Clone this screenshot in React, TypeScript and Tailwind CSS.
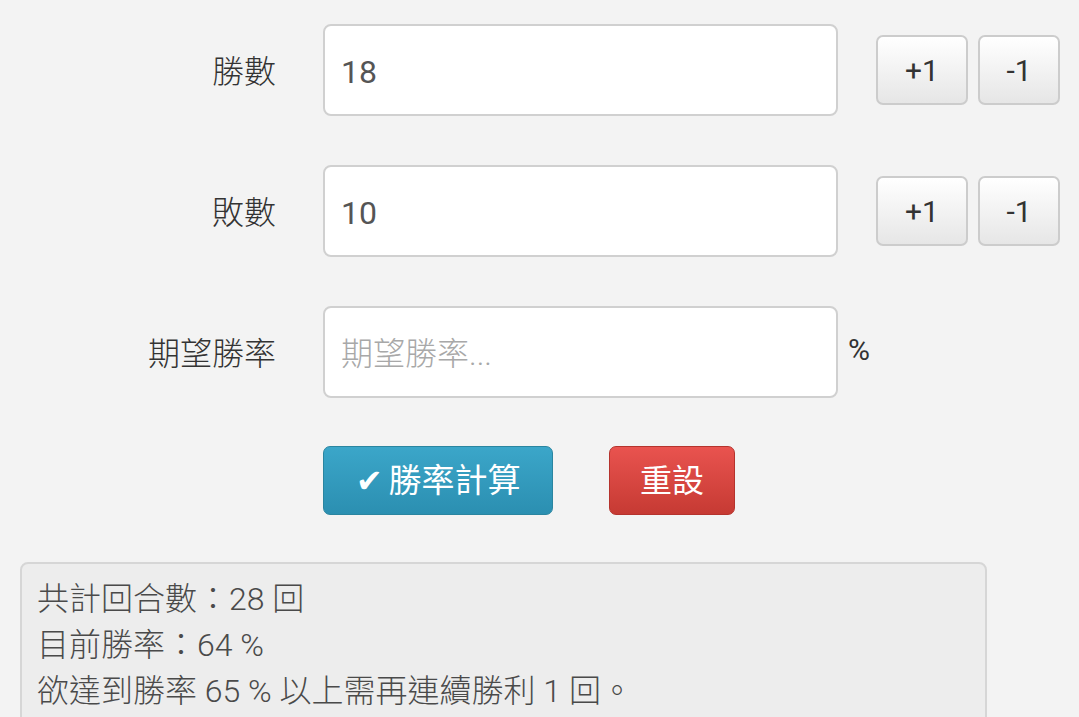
import React from "react";

const font = { fontFamily: '"Roboto", "Noto Sans CJK TC", sans-serif' };

function Row({ label, value, placeholder, suffix, buttons }: { label: string; value?: string; placeholder?: string; suffix?: boolean; buttons?: boolean }) {
  return (
    <div className="flex items-center h-[92px]">
      <div className="w-[276px] text-right text-[32px] text-[#333] font-light pt-[4px]">{label}</div>
      <div className="ml-[47px] w-[515px] h-[92px] bg-white border-2 border-[#d0d0d0] rounded-[8px] flex items-center px-[16px] text-[32px] pt-[4px]">
        {value ? <span className="text-[#555]">{value}</span> : <span className="text-[#a8a8a8] font-light">{placeholder}</span>}
      </div>
      {suffix && <div className="ml-[10px] text-[30px] text-[#333] -mt-[6px]">%</div>}
      {buttons && (
        <div className="ml-[38px] flex gap-[10px]">
          <div className="w-[92px] h-[70px] rounded-[7px] border-2 border-[#cccccc] bg-gradient-to-b from-white to-[#e6e6e6] flex items-center justify-center text-[30px] text-[#333]">+1</div>
          <div className="w-[82px] h-[70px] rounded-[7px] border-2 border-[#cccccc] bg-gradient-to-b from-white to-[#e6e6e6] flex items-center justify-center text-[30px] text-[#333]">-1</div>
        </div>
      )}
    </div>
  );
}

export default function App() {
  return (
    <div style={font} className="w-[1079px] h-[717px] bg-[#f3f3f3] overflow-hidden">
      <div className="pt-[24px] flex flex-col gap-[49px]">
        <Row label="勝數" value="18" buttons />
        <Row label="敗數" value="10" buttons />
        <Row label="期望勝率" placeholder="期望勝率..." suffix />
      </div>
      <div className="mt-[48px] ml-[323px] flex gap-[56px]">
        <div className="w-[230px] h-[69px] rounded-[7px] border border-[#2a85a0] bg-gradient-to-b from-[#3ba6c9] to-[#2b8fb1] flex items-center justify-center text-white text-[33px]">
          <span className="mr-[6px] text-[32px]">✔</span>勝率計算
        </div>
        <div className="w-[126px] h-[69px] rounded-[7px] border border-[#b5332d] bg-gradient-to-b from-[#e9534f] to-[#c63a33] flex items-center justify-center text-white text-[32px]">
          重設
        </div>
      </div>
      <div className="mt-[47px] ml-[20px] w-[967px] h-[200px] bg-[#ededed] border-2 border-[#d6d6d6] rounded-t-[8px] px-[15px] pt-[12px] text-[32px] text-[#4a4a4a] font-light leading-[46px]">
        <div>共計回合數：28 回</div>
        <div>目前勝率：64 %</div>
        <div>欲達到勝率 65 % 以上需再連續勝利 1 回。</div>
      </div>
    </div>
  );
}
